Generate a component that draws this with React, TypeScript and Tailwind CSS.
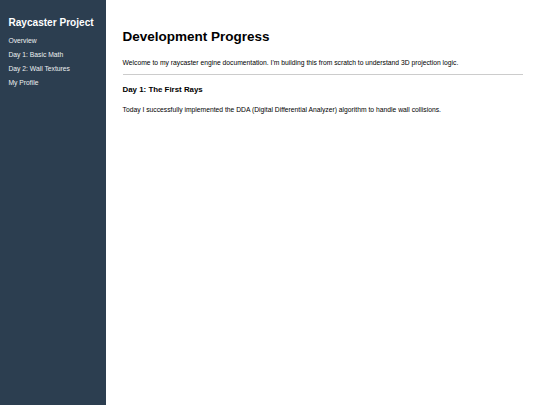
export default function App() {
  return (
    <div className="flex min-h-[405px] font-['Liberation_Sans',Arial,sans-serif]">
      <aside className="w-[105.5px] shrink-0 bg-[#2c3e50] px-[8.4px] pt-[16px] text-white">
        <h2 className="text-[10.1px] font-bold leading-[13px]">Raycaster Project</h2>
        <nav className="mt-[8px] flex flex-col gap-[6px] text-[6.75px] leading-[8px] text-[#ecf0f1]">
          <a>Overview</a>
          <a>Day 1: Basic Math</a>
          <a>Day 2: Wall Textures</a>
          <a>My Profile</a>
        </nav>
      </aside>
      <main className="flex-1 pl-[17px] pr-[17px] pt-[29px] text-black">
        <h1 className="text-[13.5px] font-bold leading-[16px]">Development Progress</h1>
        <p className="mt-[13.5px] text-[6.75px] leading-[8px]">
          Welcome to my raycaster engine documentation. I'm building this from scratch to understand 3D projection logic.
        </p>
        <hr className="mt-[7.5px] border-t border-[#ccc]" />
        <h3 className="mt-[10px] text-[7.9px] font-bold leading-[10px]">Day 1: The First Rays</h3>
        <p className="mt-[10.5px] text-[6.75px] leading-[8px]">
          Today I successfully implemented the DDA (Digital Differential Analyzer) algorithm to handle wall collisions.
        </p>
      </main>
    </div>
  );
}
